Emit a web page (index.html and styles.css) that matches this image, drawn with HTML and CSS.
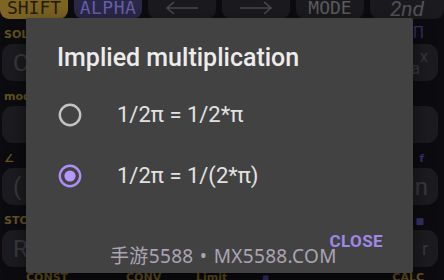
FILE: index.html
```html
<!DOCTYPE html>
<html>
<head>
<meta charset="utf-8">
<link rel="stylesheet" href="styles.css">
</head>
<body>
<div class="screen">
  <div class="calc">
    <div class="toprow">
      <div class="tkey shift">SHIFT</div>
      <div class="tkey alpha">ALPHA</div>
      <div class="tkey arrow">
        <svg width="34" height="14" viewBox="0 0 34 14"><path d="M33 7H2M9 1L2 7l7 6" fill="none" stroke="#4a4a4c" stroke-width="1.6"/></svg>
      </div>
      <div class="tkey arrow">
        <svg width="34" height="14" viewBox="0 0 34 14"><path d="M1 7h31M25 1l7 6-7 6" fill="none" stroke="#4a4a4c" stroke-width="1.6"/></svg>
      </div>
      <div class="tkey mode">MODE</div>
      <div class="tkey second">2nd</div>
    </div>

    <div class="labels"><span class="gold">SOL</span><span></span><span></span><span></span><span class="violet big">Π</span></div>
    <div class="keys">
      <div class="key"><span class="ktext">CALC</span></div>
      <div class="key"></div><div class="key"></div><div class="key"></div>
      <div class="key right"><span class="ksmall">log<sub>a</sub><sup>x</sup></span></div>
    </div>

    <div class="labels"><span class="gold">mod</span><span></span><span></span><span></span><span></span></div>
    <div class="keys">
      <div class="key"></div>
      <div class="key"></div><div class="key"></div><div class="key"></div>
      <div class="key right"></div>
    </div>

    <div class="labels"><span class="gold">∠</span><span></span><span></span><span></span><span class="violet">f</span></div>
    <div class="keys">
      <div class="key"><span class="ktext">(</span></div>
      <div class="key"></div><div class="key"></div><div class="key"></div>
      <div class="key right"><span class="ktext">ln</span></div>
    </div>

    <div class="labels"><span class="gold">STO</span><span></span><span></span><span></span><span class="violet sq">■</span></div>
    <div class="keys">
      <div class="key"><span class="ktext">RCL</span></div>
      <div class="key"></div><div class="key"></div><div class="key"></div>
      <div class="key right"><span class="ksmall">r</span></div>
    </div>

    <div class="labels bottom"><span class="gold">CONST</span><span class="gold">CONV</span><span class="gold">Limit</span><span class="violet">▪</span><span class="gold">CALC</span></div>
  </div>

  <div class="dialog">
    <div class="title">Implied multiplication</div>
    <div class="options">
      <div class="option">
        <svg class="radio" width="24" height="24" viewBox="0 0 24 24"><circle cx="12" cy="12" r="10.2" fill="none" stroke="#c4c4c4" stroke-width="2.4"/></svg>
        <span class="otext">1/2π = 1/2*π</span>
      </div>
      <div class="option">
        <svg class="radio" width="24" height="24" viewBox="0 0 24 24"><circle cx="12" cy="12" r="10.2" fill="none" stroke="#b08cf5" stroke-width="2.4"/><circle cx="12" cy="12" r="5.6" fill="#b896ff"/></svg>
        <span class="otext">1/2π = 1/(2*π)</span>
      </div>
    </div>
    <div class="actions"><span class="close">CLOSE</span></div>
  </div>

  <div class="watermark">手游5588 • MX5588.COM</div>
</div>
</body>
</html>
```

FILE: styles.css
```css
* { box-sizing: border-box; }
html, body { margin: 0; padding: 0; }
body {
  width: 444px;
  height: 280px;
  overflow: hidden;
  background: #0c0c10;
  font-family: Roboto, "Noto Sans", sans-serif;
}
.screen {
  position: relative;
  width: 444px;
  height: 280px;
  overflow: hidden;
}
.calc {
  display: flex;
  flex-direction: column;
}
.toprow {
  display: grid;
  grid-template-columns: 68px 68px 68px 68px 68px 1fr;
  gap: 6px;
  height: 29px;
  margin-top: -10px;
}
.tkey {
  border-radius: 9px;
  display: flex;
  align-items: flex-end;
  justify-content: center;
  padding-bottom: 2px;
  font-family: "DejaVu Sans Mono", "Liberation Mono", monospace;
  font-size: 18px;
  line-height: 18px;
  background: #1b1b1f;
  color: #5e5e60;
}
.shift { background: #7e6524; color: #231d0c; }
.alpha { background: #2b2848; color: #6861a8; letter-spacing: 0.5px; }
.arrow { align-items: flex-end; padding-bottom: 4px; }
.mode { color: #5c5c5e; }
.second {
  font-family: Roboto, sans-serif;
  font-style: italic;
  font-size: 21px;
  color: #545456;
  padding-bottom: 1px;
}
.labels {
  display: grid;
  grid-template-columns: repeat(5, 1fr);
  gap: 8px;
  padding: 0 6px 0 4px;
  height: 25px;
  align-items: end;
  font-family: "DejaVu Sans", sans-serif;
  font-size: 11px;
  line-height: 12px;
  padding-bottom: 3px;
}
.labels span:last-child { text-align: right; padding-right: 14px; }
.gold { color: #655420; font-weight: bold; }
.violet { color: #35306a; font-weight: bold; }
.big { font-size: 15px; line-height: 16px; font-weight: normal; }
.sq { font-size: 9px; }
.labels.bottom { height: 13px; align-items: start; padding-top: 5px; padding-left: 26px; grid-template-columns: 92px 62px 58px 1fr 1fr; }
.keys {
  display: grid;
  grid-template-columns: repeat(5, 1fr);
  gap: 8px;
  padding: 0 6px 0 2px;
  height: 37px;
}
.key {
  background: #1c1c20;
  border-radius: 11px;
  display: flex;
  align-items: center;
  padding-left: 11px;
  color: #3a3a3e;
  font-size: 24px;
}
.key.right { justify-content: flex-end; padding-right: 10px; }
.ksmall { font-size: 18px; }
.ksmall sub, .ksmall sup { font-size: 16px; }
.dialog {
  position: absolute;
  left: 26px;
  top: 18px;
  width: 387px;
  height: 255px;
  background: #424242;
  border-radius: 2px;
  display: flex;
  flex-direction: column;
  padding: 25px 30px 0 0;
  box-shadow: 0 6px 20px rgba(0,0,0,0.5);
}
.title {
  padding-left: 31px;
  font-family: Roboto, sans-serif;
  font-weight: 500;
  font-size: 25px;
  line-height: 30px;
  color: #ececec;
}
.options {
  margin-top: 11px;
  display: flex;
  flex-direction: column;
}
.option {
  height: 61px;
  display: flex;
  align-items: center;
  padding-left: 32px;
  gap: 35px;
}
.radio { flex: none; display: block; }
.otext {
  font-family: Roboto, sans-serif;
  font-size: 22px;
  line-height: 24px;
  color: #e2e2e2;
}
.actions {
  margin-top: 25px;
  display: flex;
  justify-content: flex-end;
}
.close {
  font-family: Roboto, sans-serif;
  font-weight: 700;
  font-size: 17px;
  line-height: 20px;
  letter-spacing: 0.4px;
  color: #9f88e8;
}
.watermark {
  position: absolute;
  left: 110px;
  top: 244px;
  font-family: "Noto Sans", "Noto Sans CJK SC", sans-serif;
  font-weight: 400;
  font-size: 19px;
  line-height: 24px;
  letter-spacing: 0.35px;
  word-spacing: 1px;
  color: #aca4b4;
  white-space: nowrap;
}
```
